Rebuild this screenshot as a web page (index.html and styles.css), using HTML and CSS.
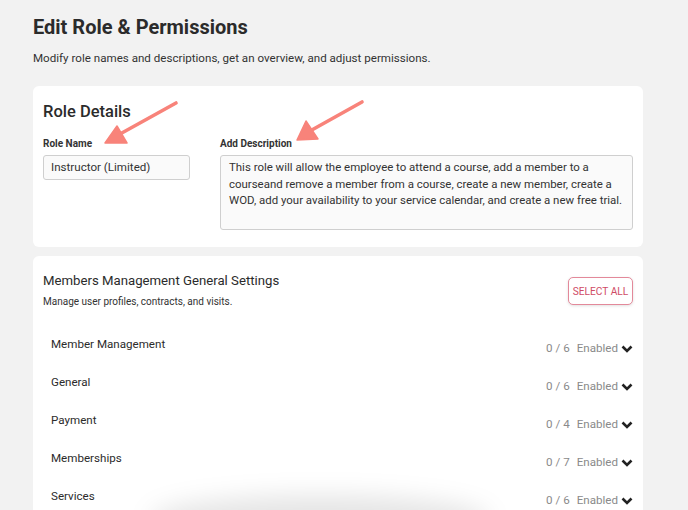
FILE: index.html
```html
<!DOCTYPE html>
<html lang="en">
<head>
<meta charset="utf-8">
<title>Edit Role &amp; Permissions</title>
<link rel="stylesheet" href="styles.css">
</head>
<body>
<main class="page">
  <h1 class="page-title">Edit Role &amp; Permissions</h1>
  <p class="page-sub">Modify role names and descriptions, get an overview, and adjust permissions.</p>

  <section class="card details">
    <h2 class="card-title">Role Details</h2>
    <div class="fields">
      <div class="field">
        <label class="field-label">Role Name</label>
        <div class="input">Instructor (Limited)</div>
      </div>
      <div class="field">
        <label class="field-label">Add Description</label>
        <div class="textarea">This role will allow the employee to attend a course, add a member to a courseand remove a member from a course, create a new member, create a WOD, add your availability to your service calendar, and create a new free trial.</div>
      </div>
    </div>
  </section>

  <section class="card perms">
    <div class="perms-head">
      <div>
        <h3 class="perms-title">Members Management General Settings</h3>
        <p class="perms-sub">Manage user profiles, contracts, and visits.</p>
      </div>
      <button class="select-all">SELECT ALL</button>
    </div>
    <ul class="rows">
      <li class="row"><span class="row-name">Member Management</span><span class="row-stat"><span class="count">0 / 6</span><span class="enabled">Enabled</span><svg class="chev" viewBox="0 0 12 8" width="12" height="8"><path d="M1.5 1.5 L6 6 L10.5 1.5" fill="none" stroke="#222" stroke-width="2.6"/></svg></span></li>
      <li class="row"><span class="row-name">General</span><span class="row-stat"><span class="count">0 / 6</span><span class="enabled">Enabled</span><svg class="chev" viewBox="0 0 12 8" width="12" height="8"><path d="M1.5 1.5 L6 6 L10.5 1.5" fill="none" stroke="#222" stroke-width="2.6"/></svg></span></li>
      <li class="row"><span class="row-name">Payment</span><span class="row-stat"><span class="count">0 / 4</span><span class="enabled">Enabled</span><svg class="chev" viewBox="0 0 12 8" width="12" height="8"><path d="M1.5 1.5 L6 6 L10.5 1.5" fill="none" stroke="#222" stroke-width="2.6"/></svg></span></li>
      <li class="row"><span class="row-name">Memberships</span><span class="row-stat"><span class="count">0 / 7</span><span class="enabled">Enabled</span><svg class="chev" viewBox="0 0 12 8" width="12" height="8"><path d="M1.5 1.5 L6 6 L10.5 1.5" fill="none" stroke="#222" stroke-width="2.6"/></svg></span></li>
      <li class="row"><span class="row-name">Services</span><span class="row-stat"><span class="count">0 / 6</span><span class="enabled">Enabled</span><svg class="chev" viewBox="0 0 12 8" width="12" height="8"><path d="M1.5 1.5 L6 6 L10.5 1.5" fill="none" stroke="#222" stroke-width="2.6"/></svg></span></li>
    </ul>
  </section>
</main>

<div class="float-shadow"></div>

<svg class="annotations" width="688" height="510" viewBox="0 0 688 510">
  <g fill="#f8837a" stroke="#f8837a">
    <line x1="176" y1="103" x2="120" y2="134" stroke-width="3.6" stroke-linecap="round"/>
    <polygon points="105,143 117,126 127,143" stroke-width="1.5" stroke-linejoin="round"/>
    <line x1="362" y1="102" x2="310" y2="131" stroke-width="3.6" stroke-linecap="round"/>
    <polygon points="297,140 306,121 318,139" stroke-width="1.5" stroke-linejoin="round"/>
  </g>
</svg>
</body>
</html>
```

FILE: styles.css
```css
* { box-sizing: border-box; }

html, body {
  margin: 0;
  padding: 0;
  background: #f2f2f2;
  height: 510px;
  overflow: hidden;
}

body {
  font-family: Roboto, "Liberation Sans", sans-serif;
  color: #333;
  position: relative;
}

.page {
  padding: 14px 45px 0 33px;
}

.page-title {
  margin: 0;
  font-size: 20px;
  line-height: 26px;
  font-weight: 700;
  color: #2b2b2b;
}

.page-sub {
  margin: 11px 0 0;
  font-size: 11.6px;
  line-height: 15px;
  color: #333;
}

.card {
  background: #fff;
  border-radius: 6px;
}

.details {
  margin-top: 20px;
  padding: 16px 10px 17px;
}

.card-title {
  margin: 0;
  font-size: 16.5px;
  line-height: 20px;
  font-weight: 500;
  color: #2b2b2b;
}

.fields {
  display: grid;
  grid-template-columns: 147px 1fr;
  column-gap: 30px;
  margin-top: 15px;
}

.field {
  display: flex;
  flex-direction: column;
  gap: 5px;
}

.field-label {
  font-size: 10px;
  line-height: 13px;
  font-weight: 700;
  color: #333;
}

.input, .textarea {
  background: #fafafa;
  border: 1px solid #cfcfcf;
  border-radius: 3px;
  font-size: 11.6px;
  color: #333;
}

.input {
  height: 25px;
  line-height: 23px;
  padding: 0 7px;
}

.textarea {
  height: 75px;
  font-size: 11.45px;
  line-height: 16.5px;
  padding: 3px 3px 3px 8px;
}

.perms {
  margin-top: 9px;
  padding: 17px 10px 0;
  height: 300px;
}

.perms-head {
  display: flex;
  justify-content: space-between;
  align-items: flex-start;
}

.perms-title {
  margin: 0;
  font-size: 13.2px;
  line-height: 16px;
  font-weight: 400;
  color: #2b2b2b;
}

.perms-sub {
  margin: 6px 0 0;
  font-size: 10px;
  line-height: 13px;
  color: #333;
}

.select-all {
  margin-top: 4px;
  width: 65px;
  height: 28px;
  padding: 0;
  background: #fff;
  border: 1px solid #e3899a;
  border-radius: 5px;
  color: #cf4b66;
  font-family: Roboto, "Liberation Sans", sans-serif;
  font-size: 10.2px;
  box-shadow: 0 1px 3px rgba(0, 0, 0, 0.12);
}

.rows {
  list-style: none;
  margin: 29px 0 0;
  padding: 0 0 0 8px;
}

.row {
  display: flex;
  justify-content: space-between;
  align-items: flex-start;
  height: 38px;
  font-size: 11.6px;
  line-height: 15px;
}

.row-name {
  color: #2b2b2b;
}

.row-stat {
  display: flex;
  align-items: center;
  margin-top: 4px;
  color: #8a8a8a;
}

.enabled {
  margin-left: 7px;
}

.chev {
  margin-left: 3px;
}

.float-shadow {
  position: absolute;
  left: 150px;
  top: 495px;
  width: 340px;
  height: 50px;
  border-radius: 50%;
  background: rgba(0, 0, 0, 0.10);
  filter: blur(12px);
  pointer-events: none;
}

.annotations {
  position: absolute;
  left: 0;
  top: 0;
  pointer-events: none;
}
```
